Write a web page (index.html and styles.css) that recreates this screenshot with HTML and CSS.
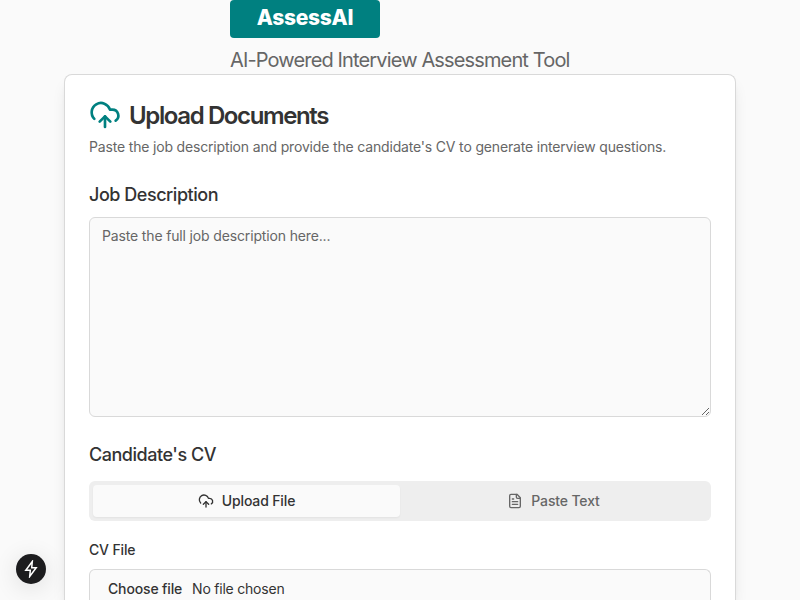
FILE: index.html
```html
<!DOCTYPE html>
<html lang="en">
<head>
<meta charset="utf-8">
<title>AssessAI</title>
<link rel="stylesheet" href="styles.css">
</head>
<body>
<header class="header">
  <h1 class="brand">AssessAI</h1>
  <p class="tagline">AI-Powered Interview Assessment Tool</p>
</header>
<main class="card">
  <h2 class="title">
    <svg class="title-icon" viewBox="0 0 24 24"><path d="M12 13v8"/><path d="M4 14.899A7 7 0 1 1 15.71 8h1.79a4.5 4.5 0 0 1 2.5 8.242"/><path d="m8 17 4-4 4 4"/></svg>
    <span>Upload Documents</span>
  </h2>
  <p class="intro">Paste the job description and provide the candidate's CV to generate interview questions.</p>
  <label class="label" for="job">Job Description</label>
  <textarea class="job" id="job" placeholder="Paste the full job description here..."></textarea>
  <div class="label label-cv">Candidate's CV</div>
  <div class="tabs">
    <div class="tab tab-active">
      <svg class="tab-icon" viewBox="0 0 24 24"><path d="M12 13v8"/><path d="M4 14.899A7 7 0 1 1 15.71 8h1.79a4.5 4.5 0 0 1 2.5 8.242"/><path d="m8 17 4-4 4 4"/></svg>
      <span>Upload File</span>
    </div>
    <div class="tab">
      <svg class="tab-icon" viewBox="0 0 24 24"><path d="M15 2H6a2 2 0 0 0-2 2v16a2 2 0 0 0 2 2h12a2 2 0 0 0 2-2V7Z"/><path d="M14 2v4a2 2 0 0 0 2 2h4"/><path d="M10 9H8"/><path d="M16 13H8"/><path d="M16 17H8"/></svg>
      <span>Paste Text</span>
    </div>
  </div>
  <div class="file-label">CV File</div>
  <div class="file"><span class="choose">Choose file</span><span class="chosen">No file chosen</span></div>
</main>
<div class="badge"><svg class="bolt" viewBox="0 0 14 18"><path d="M8.300 1.500 1.800 10.300H6.300L5.700 16.500 12.200 7.700H7.700Z"/></svg></div>
</body>
</html>
```
FILE: styles.css
```css
* { box-sizing: border-box; margin: 0; }
html { height: 100%; overflow: hidden; }
body { height: 600px; overflow: hidden; background: #fafafa; color: #333; font: 14px/20px Inter, sans-serif; }
svg { fill: none; stroke: currentColor; stroke-width: 2; stroke-linecap: round; stroke-linejoin: round; flex: none; }
.header { width: 340px; height: 73.500px; margin: 0 auto; white-space: nowrap; }
.brand { width: 150px; height: 37.500px; border-radius: 4px; background: #008080; color: #fff; font-size: 21px; font-weight: 800; line-height: 35px; letter-spacing: -0.3px; text-align: center; }
.tagline { margin-top: 8.500px; font-size: 20px; line-height: 28px; color: #666; letter-spacing: -0.86px; }
.card { width: 672px; height: 526.500px; margin: 0 auto; padding: 23.500px 24px 0; border: 1px solid #d9d9d9; border-bottom: 0; border-radius: 8px 8px 0 0; background: #fff; box-shadow: 0 10px 15px -3px rgb(0 0 0 / .1), 0 4px 6px -4px rgb(0 0 0 / .1); }
.title { display: flex; align-items: center; gap: 8px; height: 32px; font-size: 24px; font-weight: 600; line-height: 32px; letter-spacing: -1.38px; margin-top: 2px; }
.title-icon { width: 32px; height: 32px; margin-top: -2px; color: #008080; }
.intro { margin-top: 5px; color: #666; letter-spacing: -0.17px; }
.label { display: block; margin-top: 24px; font-size: 18px; font-weight: 500; line-height: 28px; letter-spacing: -0.46px; }
.job { display: block; width: 100%; height: 200px; margin-top: 7.500px; padding: 8.500px 12px; border: 1px solid #d9d9d9; border-radius: 6px; outline: 0; background: #fafafa; font: inherit; letter-spacing: -0.15px; resize: vertical; }
.job::placeholder { color: #666; }
.label-cv { margin-top: 24.500px; }
.tabs { display: grid; grid-template-columns: 1fr 1fr; height: 40px; margin-top: 11.500px; padding: 4px; border-radius: 6px; background: #eee; letter-spacing: -0.14px; }
.tab { display: flex; align-items: center; justify-content: center; gap: 8px; color: #666; font-weight: 500; }
.tab-active { border-radius: 4px; background: #fafafa; color: #333; box-shadow: 0 1px 2px rgb(0 0 0 / .05); }
.tab-icon { width: 16px; height: 16px; }
.file-label { margin-top: 19.500px; font-weight: 500; letter-spacing: -0.15px; }
.file { display: flex; gap: 10px; height: 31.500px; margin-top: 8.500px; padding: 9.500px 18px 0; border: 1px solid #d9d9d9; border-bottom: 0; border-radius: 6px 6px 0 0; background: #fafafa; }
.choose { font-weight: 500; letter-spacing: -0.15px; }
.chosen { letter-spacing: -0.22px; }
.badge { position: fixed; left: 16px; bottom: 16px; display: grid; place-items: center; width: 30px; height: 30px; border-radius: 50%; background: #1c1c1e; color: #fff; box-shadow: 0 4px 24px rgb(0 0 0 / .12); }
.bolt { width: 14px; height: 18px; stroke-width: 1.5; stroke-linejoin: miter; }
```
